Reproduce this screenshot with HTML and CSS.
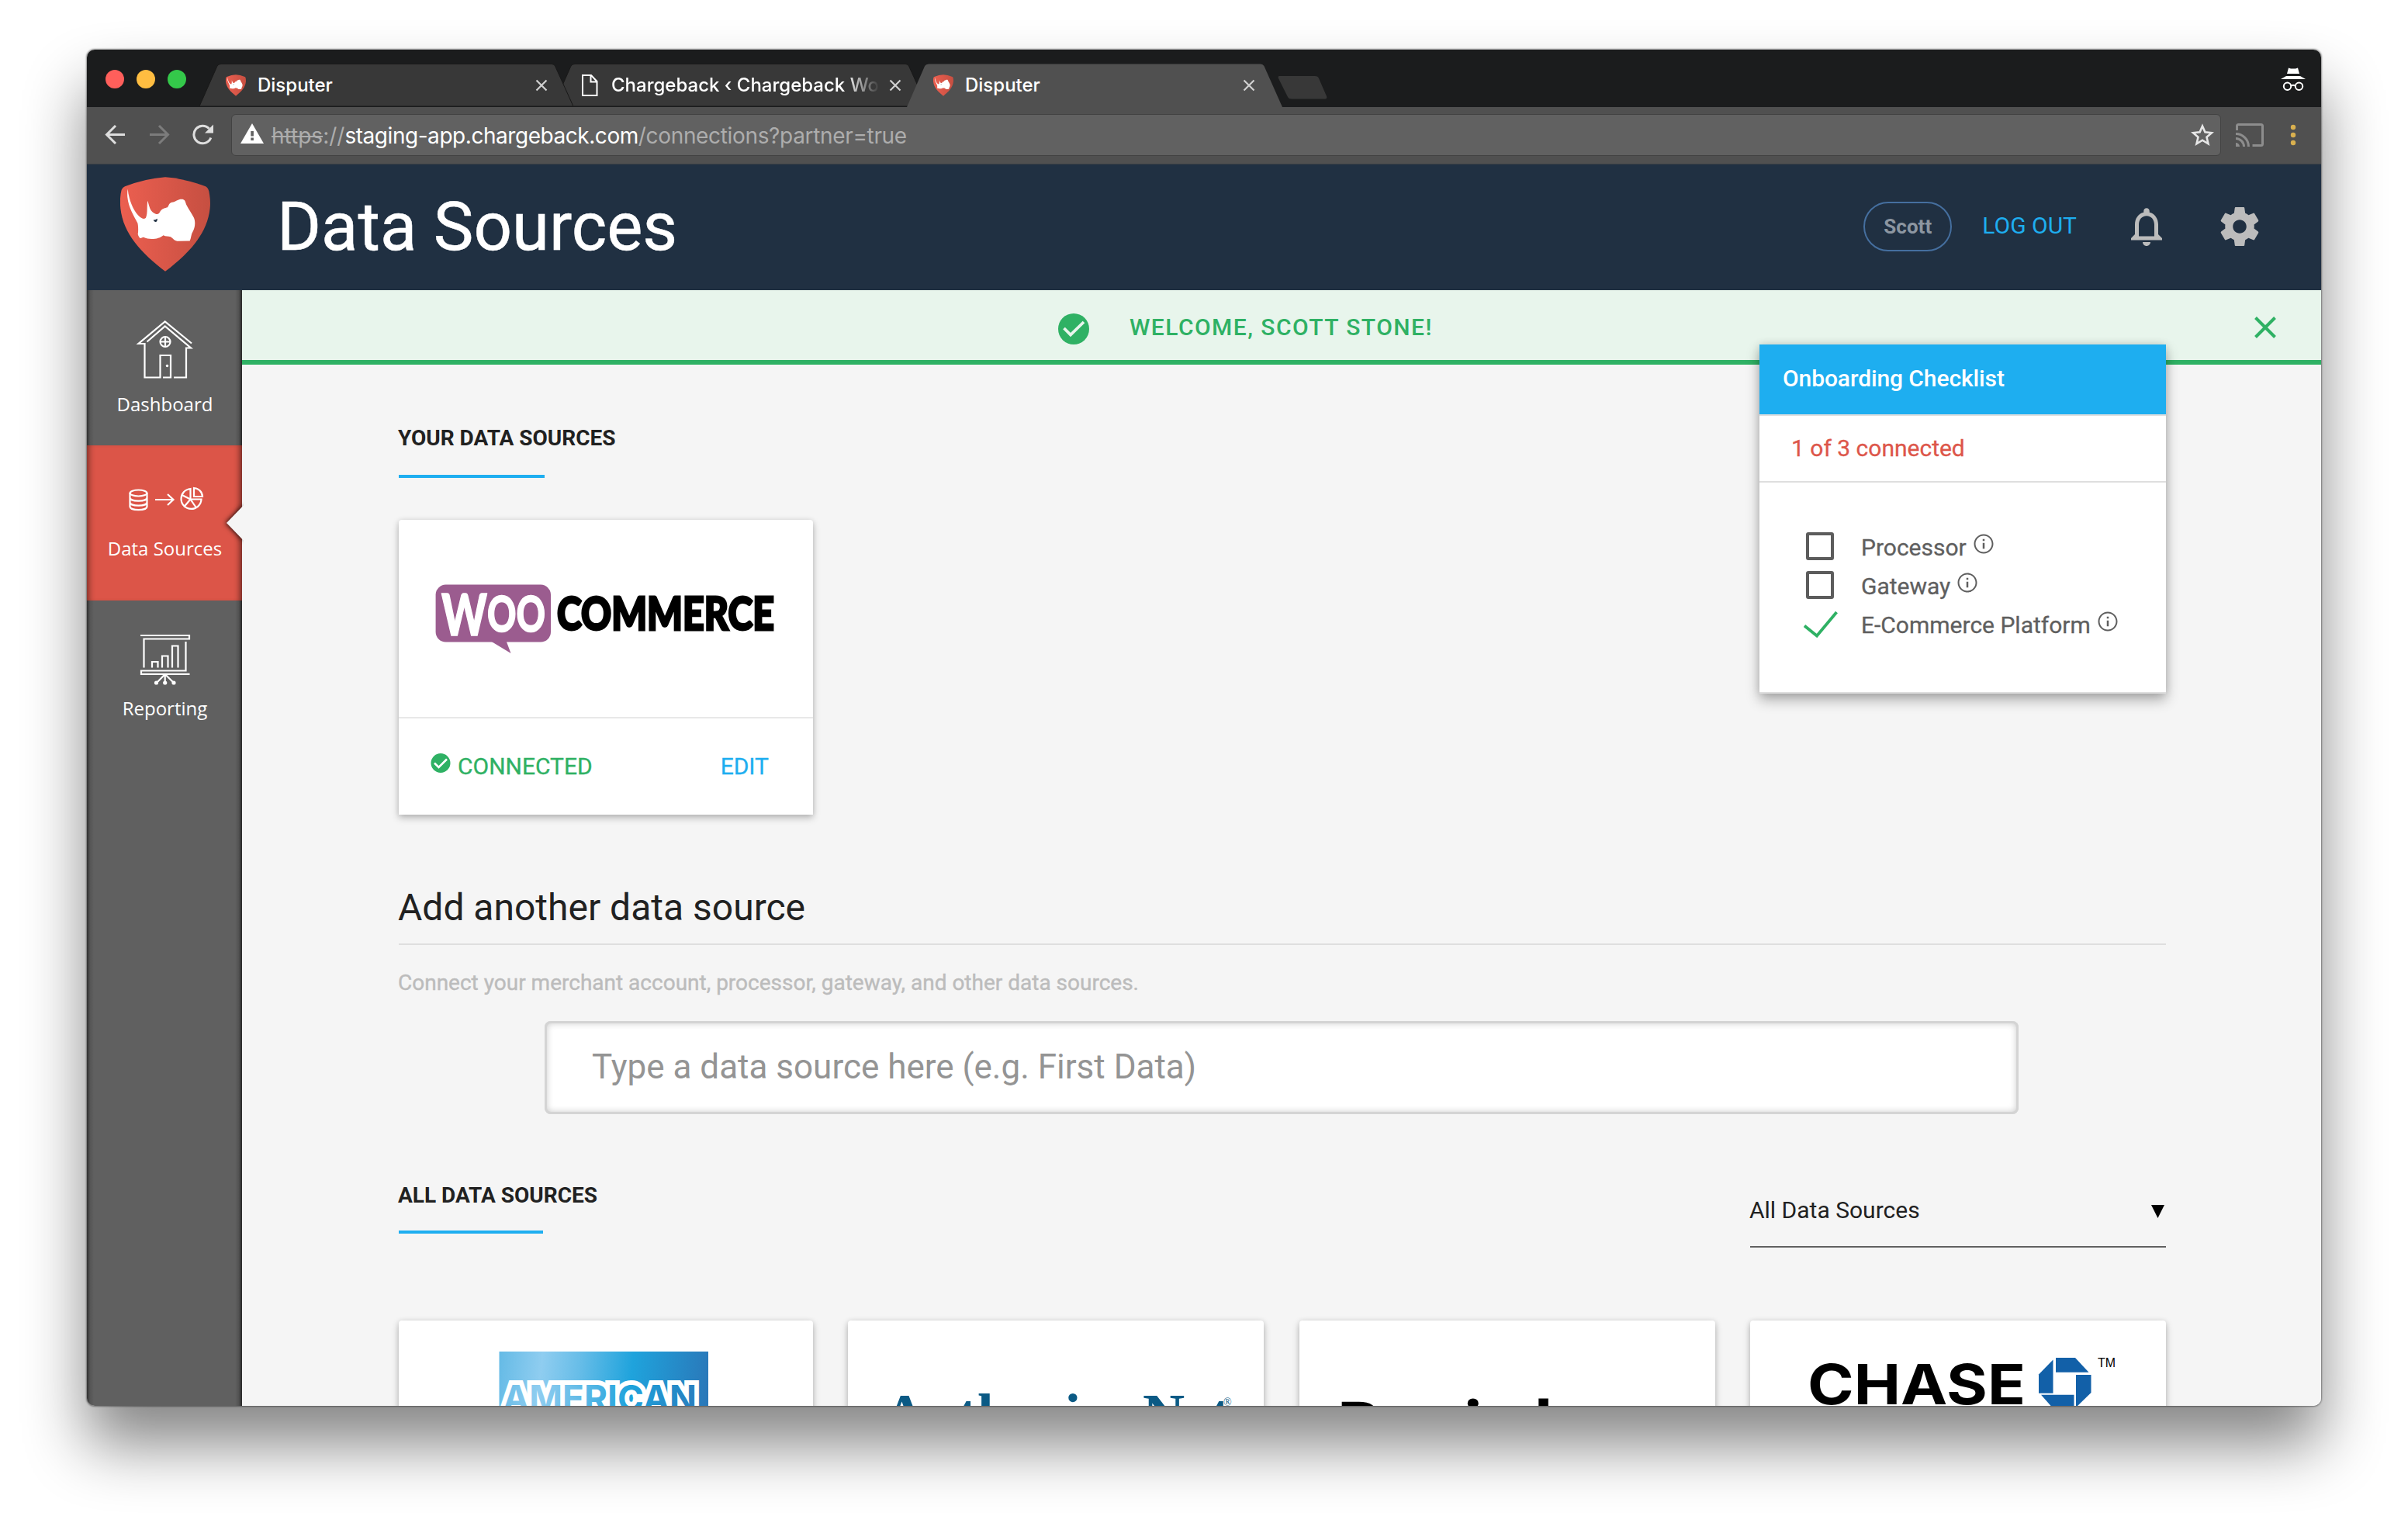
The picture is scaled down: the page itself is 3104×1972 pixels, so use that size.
FILE: index.html
```html
<!DOCTYPE html>
<html lang="en">
<head>
<meta charset="utf-8">
<title>Disputer</title>
<link rel="stylesheet" href="styles.css">
</head>
<body>
<svg class="defs" width="0" height="0" aria-hidden="true">
  <defs>
    <linearGradient id="shieldFill" x1="0" x2="1" y1="0" y2="0">
      <stop offset="0" stop-color="#ec5f50"/><stop offset="1" stop-color="#c64f41"/>
    </linearGradient>
    <linearGradient id="amexFill" gradientUnits="userSpaceOnUse" x1="129" y1="60" x2="399" y2="90">
      <stop offset="0" stop-color="#66bbe6"/><stop offset=".2" stop-color="#8fcdf0"/><stop offset=".38" stop-color="#67bde8"/><stop offset=".63" stop-color="#1fa3dc"/><stop offset="1" stop-color="#2a78b9"/>
    </linearGradient>
    <symbol id="shield" viewBox="75 40 348 365">
      <path fill="url(#shieldFill)" d="M249 40Q320 45 405 76Q414 80 418 95Q425 130 422 160C412 260 340 335 249 405C158 335 86 260 76 160Q72 120 80 90Q84 80 93 76Q175 45 249 40Z"/>
      <path fill="#fff" d="M104 86C108 130 130 185 160 200Q170 203 174 198C182 180 177 150 181 132C188 155 190 175 212 183C222 186 226 180 230 172C238 160 248 160 258 157C264 148 264 138 280 137C292 134 298 126 312 126C324 126 326 132 330 146C340 165 352 182 360 198C368 218 362 240 356 250C348 262 350 275 344 287L300 288C285 288 280 278 270 271C260 268 250 270 242 265C225 280 190 285 165 273C158 273 154 280 150 275C144 265 142 262 144 255C145 240 144 225 142 218C125 185 95 140 104 86Z"/>
      <path fill="#203042" d="M203 206Q212 207 218 201Q220 210 213 214Q204 213 203 206Z"/>
    </symbol>
    <symbol id="tabClose" viewBox="0 0 16 16"><path d="M1.500 1.500l13 13M14.500 1.500l-13 13" stroke="#d0d0d0" stroke-width="2.200" fill="none"/></symbol>
    <symbol id="info" viewBox="0 0 24 24"><path fill="#5f5f5f" d="M11 17h2v-6h-2v6zm1-15C6.480 2 2 6.480 2 12s4.480 10 10 10 10-4.480 10-10S17.520 2 12 2zm0 18.400c-4.630 0-8.400-3.770-8.400-8.400S7.370 3.600 12 3.600s8.400 3.770 8.400 8.400-3.770 8.400-8.400 8.400zM11 9h2V7h-2v2z"/></symbol>
    <symbol id="tabShape" viewBox="0 0 482 55" preserveAspectRatio="none">
      <path d="M0 55L23 3Q24.500 .5 28 .5H454Q457 .5 458.500 3L482 55Z"/>
    </symbol>
  </defs>
</svg>

<div class="window">
  <div class="titlebar">
    <div class="lights"><i class="light red"></i><i class="light yellow"></i><i class="light green"></i></div>
    <div class="tabs">
      <div class="tab front">
        <svg class="tab-shape"><use href="#tabShape"/></svg>
        <svg class="tab-icon"><use href="#shield"/></svg>
        <span class="tab-title">Disputer</span>
        <svg class="tab-close"><use href="#tabClose"/></svg>
      </div>
      <div class="tab">
        <svg class="tab-shape"><use href="#tabShape"/></svg>
        <svg class="tab-icon" viewBox="0 0 26 28"><path d="M4 1H15L22.500 9V27H4ZM14.500 1V9.500H22.500" fill="none" stroke="#fff" stroke-width="2"/></svg>
        <span class="tab-title fade">Chargeback ‹ Chargeback Wor</span>
        <svg class="tab-close"><use href="#tabClose"/></svg>
      </div>
      <div class="tab active">
        <svg class="tab-shape"><use href="#tabShape"/></svg>
        <svg class="tab-icon"><use href="#shield"/></svg>
        <span class="tab-title">Disputer</span>
        <svg class="tab-close"><use href="#tabClose"/></svg>
      </div>
      <svg class="new-tab" viewBox="0 0 64 30"><path d="M2 0H48Q52 0 53 3L63 26Q64 29.500 61 29.500H18Q14 29.500 13 27L1 3Q0 0 2 0Z" fill="#383838"/></svg>
    </div>
    <svg class="incognito" viewBox="0 0 32 30"><path fill="#fff" d="M10 .5L13 1.500H19L22 .5L24 8H8ZM7 11H25L32 15H0Z"/><g fill="none" stroke="#fff" stroke-width="2"><circle cx="8.500" cy="24.200" r="4.700"/><circle cx="23.500" cy="24.200" r="4.700"/><path d="M13 23.500Q16 22 19 23.500"/></g></svg>
  </div>

  <div class="toolbar">
    <svg class="nav" viewBox="0 0 28 28"><path d="M26 13.500H3M14 2L2.500 13.500L14 25" fill="none" stroke="#dedede" stroke-width="3"/></svg>
    <svg class="nav" viewBox="0 0 28 28"><path d="M2 13.500H25M14 2L25.500 13.500L14 25" fill="none" stroke="#7c7c7c" stroke-width="3"/></svg>
    <svg class="nav" viewBox="0 0 28 28"><path d="M22.500 5.800A11.300 11.300 0 1 0 24.800 17.500" fill="none" stroke="#dedede" stroke-width="3"/><path d="M28 .5V11.500H17Z" fill="#dedede"/></svg>
    <div class="omnibox">
      <svg class="warning" viewBox="0 0 30 26"><path d="M15 0L30 26H0Z" fill="#fff"/><path d="M13.300 10h3.600v6.500h-3.600zM13.300 18.500h3.600v3.600h-3.600z" fill="#616161"/></svg>
      <div class="url"><s>https</s>://<b>staging-app.chargeback.com</b><span class="path">/connections?partner=true</span></div>
      <svg class="star" viewBox="0 0 30 30"><path d="M15 3.500L18.400 11.300L27 12.200L20.500 17.800L22.500 26.300L15 21.700L7.500 26.300L9.500 17.800L3 12.200L11.600 11.300Z" fill="none" stroke="#e6e6e6" stroke-width="2.600"/></svg>
    </div>
    <svg class="cast" viewBox="0 0 36 30"><g fill="none" stroke="#8d8d8d" stroke-width="3"><path d="M1.500 9V3.500Q1.500 1.500 3.500 1.500H32.500Q34.500 1.500 34.500 3.500V26.500Q34.500 28.500 32.500 28.500H21.500"/><path d="M0 13.500A16.500 16.500 0 0 1 16.500 30M0 19.500A10.500 10.500 0 0 1 10.500 30"/></g><path d="M0 25A5 5 0 0 1 5 30H0Z" fill="#8d8d8d"/></svg>
    <svg class="dots" viewBox="0 0 12 28"><g fill="#d9b04f"><circle cx="6" cy="4" r="3.200"/><circle cx="6" cy="14" r="3.200"/><circle cx="6" cy="24" r="3.200"/></g></svg>
  </div>

  <header class="header">
    <svg class="logo"><use href="#shield"/></svg>
    <h1 class="title">Data Sources</h1>
    <span class="user">Scott</span>
    <a class="logout">LOG OUT</a>
    <svg class="bell" viewBox="0 0 24 24"><path d="M12 22c1.100 0 2-.9 2-2h-4c0 1.100.9 2 2 2zm6-6v-5c0-3.070-1.630-5.640-4.500-6.320V4c0-.83-.67-1.500-1.500-1.500s-1.500.67-1.500 1.500v.68C7.640 5.360 6 7.920 6 11v5l-2 2v1h16v-1l-2-2zm-2 1H8v-6c0-2.480 1.510-4.500 4-4.500s4 2.020 4 4.500v6z"/></svg>
    <svg class="gear" viewBox="0 0 24 24"><path d="M19.430 12.980c.04-.32.07-.64.07-.98s-.03-.66-.07-.98l2.110-1.650c.19-.15.24-.42.12-.64l-2-3.460c-.12-.22-.39-.3-.61-.22l-2.490 1c-.52-.4-1.080-.73-1.690-.98l-.38-2.650C14.460 2.180 14.250 2 14 2h-4c-.25 0-.46.18-.49.42l-.38 2.650c-.61.25-1.170.59-1.690.98l-2.490-1c-.23-.09-.49 0-.61.22l-2 3.460c-.13.22-.07.49.12.64l2.110 1.650c-.04.32-.07.65-.07.98s.03.66.07.98l-2.110 1.650c-.19.15-.24.42-.12.64l2 3.460c.12.22.39.3.61.22l2.490-1c.52.4 1.080.73 1.690.98l.38 2.650c.03.24.24.42.49.42h4c.25 0 .46-.18.49-.42l.38-2.650c.61-.25 1.170-.59 1.690-.98l2.490 1c.23.09.49 0 .61-.22l2-3.460c.12-.22.07-.49-.12-.64l-2.110-1.650zM12 15.500c-1.930 0-3.500-1.570-3.500-3.500s1.570-3.500 3.500-3.500 3.500 1.570 3.500 3.500-1.570 3.500-3.500 3.500z"/></svg>
  </header>

  <div class="body">
    <nav class="sidebar">
      <a class="item">
        <svg class="art art-home" viewBox="0 0 200 130"><g fill="none" stroke="#fff" stroke-width="2.200">
          <path d="M135 68.500L100.700 40.500L66.500 69H74.500V112.500H94.500V84H108V112.500H98"/><path d="M77.500 66.500L100.700 46.500L134 74.500H128V112.500H112"/>
          <circle cx="101" cy="66.500" r="6.500"/><path d="M101 60V73M94.500 66.500H107.500"/></g><circle cx="103.500" cy="97.500" r="1.700" fill="#fff"/></svg>
        <span>Dashboard</span>
      </a>
      <a class="item active">
        <svg class="art art-sources" viewBox="0 0 200 116"><g fill="none" stroke="#fff" stroke-width="2.200">
          <ellipse cx="66.500" cy="61.500" rx="11" ry="4"/><path d="M55.500 61.500V79C55.500 84.500 77.500 84.500 77.500 79V61.500M55.500 67.500C55.500 73 77.500 73 77.500 67.500M55.500 73.500C55.500 79 77.500 79 77.500 73.500"/>
          <path d="M88 70H111M104 63L111.500 70L104 77"/>
          <path d="M133.500 56A13 13 0 1 0 147.500 69.500H133.500ZM133.500 69.500L121.500 63.500M133.500 69.500L125 79.500M133.500 69.500L141 80.500"/><path d="M138 55A11.500 11.500 0 0 1 149 66H138Z"/></g></svg>
        <span>Data Sources</span>
        <svg class="notch" viewBox="0 0 34 60"><path d="M34 7.300L12 30L34 52.700Z" fill="#f5f5f5"/></svg>
      </a>
      <a class="item">
        <svg class="art art-report" viewBox="0 0 200 122"><g fill="none" stroke="#fff" stroke-width="2.200">
          <path d="M69 45H132V49.500H73.500V86.500M127.500 53V90.500H70V94.800H132.500"/>
          <path d="M84 86.500V79H91.500V86.500M97 86.500V71.500H104.500V86.500M110 86.500V58.500H117.500V86.500"/>
          <path d="M100.700 95L90 106M100.700 95V106M100.700 95L112 106"/></g><g fill="#fff"><circle cx="89.500" cy="106" r="2.600"/><circle cx="100.700" cy="106" r="2.600"/><circle cx="112" cy="106" r="2.600"/></g></svg>
        <span>Reporting</span>
      </a>
    </nav>

    <main class="main">
      <div class="banner">
        <svg class="banner-check" viewBox="0 0 40 40"><circle cx="20" cy="20" r="20" fill="#2fb164"/><path d="M7.500 19L16 27.500L33 11" fill="none" stroke="#e8f5ec" stroke-width="3.800"/></svg>
        <span>WELCOME, SCOTT STONE!</span>
        <svg class="banner-close" viewBox="0 0 28 28"><path d="M1.500 1.500L26.500 26.500M26.500 1.500L1.500 26.500" stroke="#2fb164" stroke-width="4" fill="none"/></svg>
      </div>

      <div class="content">
        <h3 class="label">YOUR DATA SOURCES</h3>
        <div class="rule"></div>

        <div class="card connected-card">
          <svg class="woo" viewBox="0 0 534 254">
            <rect x="47.600" y="83.600" width="148.400" height="74" rx="13" fill="#9b5c8f"/>
            <path d="M118 156L144.500 172L138.500 156Z" fill="#9b5c8f"/>
            <g class="woo-mark"><text x="55" y="149" font-size="75" textLength="59" lengthAdjust="spacingAndGlyphs">W</text><text x="114" y="144" font-size="62" textLength="75" lengthAdjust="spacingAndGlyphs">OO</text></g>
            <text class="commerce" x="204" y="142" textLength="280" lengthAdjust="spacingAndGlyphs">COMMERCE</text>
          </svg>
          <div class="card-foot">
            <svg class="ok" viewBox="0 0 26 26"><circle cx="13" cy="12.500" r="12.500" fill="#2fb164"/><path d="M5 12.500L10.500 18L21 7.500" fill="none" stroke="#fff" stroke-width="2.600"/></svg>
            <span class="status">CONNECTED</span>
            <a class="edit">EDIT</a>
          </div>
        </div>

        <h2 class="heading">Add another data source</h2>
        <p class="hint">Connect your merchant account, processor, gateway, and other data sources.</p>
        <div class="search">Type a data source here (e.g. First Data)</div>

        <div class="filter-row">
          <div>
            <h3 class="label">ALL DATA SOURCES</h3>
            <div class="rule short"></div>
          </div>
          <div class="select"><span>All Data Sources</span><svg viewBox="0 0 17 17"><path d="M0 0H17L8.500 17Z"/></svg></div>
        </div>

        <div class="cards">
          <div class="card">
            <svg viewBox="0 0 536 160"><rect x="129.500" y="40" width="269.500" height="130" fill="url(#amexFill)"/>
              <text class="amex" x="134" y="117" textLength="250" lengthAdjust="spacingAndGlyphs">AMERICAN</text></svg>
          </div>
          <div class="card">
            <svg viewBox="0 0 536 160"><text class="authnet" x="46" y="146">Authorize.<tspan x="380">Net</tspan></text><text class="reg" x="484" y="110">®</text></svg>
          </div>
          <div class="card">
            <svg viewBox="0 0 536 180"><text class="braintree" x="49 104 145 212 241 301 345 385 435" y="168 168 168 166 168 159 168 168 168">Braintree</text></svg>
          </div>
          <div class="card">
            <svg viewBox="0 0 536 160"><text class="chase" x="74" y="108" textLength="281" lengthAdjust="spacingAndGlyphs">CHASE</text>
              <g fill="#1260a8"><path d="M394 48H419L436.500 66.700H394Z"/><path d="M372 69.500L390.500 50.500V93.700H372Z"/><path d="M420 70H439.500V93L420 112Z"/><path d="M375 95.700H417.500V115H392Z"/></g>
              <text class="tm" x="448" y="60" textLength="23" lengthAdjust="spacingAndGlyphs">TM</text></svg>
          </div>
        </div>
      </div>

      <aside class="checklist">
        <div class="checklist-title">Onboarding Checklist</div>
        <div class="checklist-count">1 of 3 connected</div>
        <ul>
          <li><svg class="mark" viewBox="0 0 44 36"><rect x="5" y="2" width="32" height="32" rx="1" fill="none" stroke="#5c5c5c" stroke-width="4"/></svg><span>Processor</span><svg class="info"><use href="#info"/></svg></li>
          <li><svg class="mark" viewBox="0 0 44 36"><rect x="5" y="2" width="32" height="32" rx="1" fill="none" stroke="#5c5c5c" stroke-width="4"/></svg><span>Gateway</span><svg class="info"><use href="#info"/></svg></li>
          <li><svg class="mark" viewBox="0 0 44 36"><path d="M1 20.500L17 33.500L42.500 3" fill="none" stroke="#2fb164" stroke-width="3.800"/></svg><span>E-Commerce Platform</span><svg class="info"><use href="#info"/></svg></li>
        </ul>
      </aside>
    </main>
  </div>
</div>
</body>
</html>
```
FILE: styles.css
```css
* { box-sizing: border-box; }

body {
  margin: 0;
  height: 1972px;
  padding: 64px 112px 0;
  overflow: hidden;
  background: #fff;
  font-family: Roboto, "Liberation Sans", sans-serif;
}

h1, h2, h3, p, ul { margin: 0; padding: 0; font-weight: 400; }
svg { display: block; flex: none; }
.defs { position: absolute; }

.window {
  display: flex;
  flex-direction: column;
  width: 2880px;
  height: 1748px;
  border-radius: 10px;
  overflow: hidden;
  background: #f5f5f5;
  box-shadow: 0 0 2px 1px rgba(0, 0, 0, .4), 0 50px 80px rgba(0, 0, 0, .48);
}

/* Browser chrome */
.titlebar {
  display: flex;
  flex: none;
  height: 74px;
  background: #1b1c1d;
}

.lights { display: flex; gap: 16px; width: 145px; padding: 26px 0 0 24px; }
.light { width: 24px; height: 24px; border-radius: 50%; }
.red { background: #ff5f5b; }
.yellow { background: #ffbd41; }
.green { background: #34c84a; }

.tabs { display: flex; flex: 1; padding-top: 18px; font: 500 24px/1 Inter, "Liberation Sans", sans-serif; color: #fff; }
.tab { position: relative; display: flex; align-items: center; width: 482px; height: 55px; padding-left: 34px; }
.tab + .tab { margin-left: -26px; }
.tab.front { z-index: 1; }
.tab.active { z-index: 2; height: 56px; width: 484px; }
.tab-shape { position: absolute; left: 0; top: 0; width: 100%; height: 100%; fill: #383838; stroke: #191919; stroke-width: 1; }
.tab.active .tab-shape { fill: #505050; stroke: none; }
.tab-icon { position: relative; width: 26px; height: 28px; margin-right: 15px; }
.tab-title { position: relative; width: 346px; line-height: 36px; white-space: nowrap; }
.fade { -webkit-mask-image: linear-gradient(to right, #000 87%, transparent); mask-image: linear-gradient(to right, #000 87%, transparent); }
.tab-close { position: relative; width: 16px; height: 16px; margin-left: 12px; }
.new-tab { width: 64px; height: 30px; margin: 16px 0 0 -6px; }
.incognito { width: 32px; height: 30px; margin: 23px 20px 0 0; }

.toolbar {
  display: flex;
  flex: none;
  align-items: center;
  height: 74px;
  padding: 0 0 2px 23px;
  background: #505050;
  border-bottom: 1px solid #3a3f44;
}
.nav { width: 28px; height: 28px; margin-right: 28px; }
.omnibox {
  display: flex;
  align-items: center;
  width: 2565px;
  height: 54px;
  margin-left: -5px;
  padding: 0 8px 0 11px;
  background: #616161;
  border: 1px solid #424242;
  border-radius: 6px;
}
.warning { width: 30px; height: 26px; margin: -4px 10px 0 0; }
.url { flex: 1; padding-top: 2px; font: 400 28px/40px Inter, "Liberation Sans", sans-serif; color: #adadad; }
.url b { font-weight: 400; color: #fff; letter-spacing: -.45px; }
.path { letter-spacing: -.34px; }
.star { width: 30px; height: 30px; }
.cast { width: 36px; height: 30px; margin-left: 19px; }
.dots { width: 12px; height: 28px; margin-left: 32px; }

/* Application header */
.header {
  display: flex;
  flex: none;
  align-items: center;
  height: 162px;
  padding: 0 75px 2px 43px;
  background: #203042;
}
.logo { width: 116px; height: 122px; margin-top: -6px; }
.title { flex: 1; margin-left: 86px; font-size: 87px; line-height: 120px; color: #fff; -webkit-text-stroke: .5px #fff; }
.user {
  width: 114px;
  height: 64px;
  border: 2px solid #456f9f;
  border-radius: 32px;
  font-size: 26px;
  font-weight: 700;
  line-height: 61px;
  text-align: center;
  color: #8c96a1;
}
.logout { margin: -3px 60px 0 39px; font-size: 30px; color: #1eaef0; }
.bell, .gear { width: 60px; height: 60px; fill: #bcbcbc; }
.gear { margin-left: 60px; }

.body { display: flex; flex: 1; min-height: 0; }

/* Sidebar */
.sidebar { position: relative; flex: none; width: 200px; background: #606060; }
.sidebar::after {
  content: "";
  position: absolute;
  inset: 0;
  background:
    linear-gradient(to right, rgba(0, 0, 0, .5), rgba(0, 0, 0, .12) 4px, transparent 9px),
    linear-gradient(to left, rgba(0, 0, 0, .6), rgba(0, 0, 0, .15) 4px, transparent 9px);
}
.item {
  position: relative;
  display: flex;
  flex-direction: column;
  align-items: center;
  height: 200px;
  font: 400 24px/34px "Open Sans", "Noto Sans", sans-serif;
  color: #fff;
}
.item span { padding-left: 1px; }
.item.active { z-index: 1; background: #dc5548; box-shadow: inset 9px 0 8px -7px rgba(0, 0, 0, .5), inset -9px 0 8px -7px rgba(0, 0, 0, .6); }
.art { width: 200px; }
.art-home { height: 130px; }
.art-sources { height: 116px; }
.art-report { height: 122px; }
.notch { position: absolute; right: -2px; top: 70px; width: 34px; height: 60px; filter: drop-shadow(-1px 0 3px rgba(0, 0, 0, .9)); clip-path: inset(0 0 0 0); }

/* Main column */
.main { position: relative; flex: 1; background: #f5f5f5; }
.banner {
  display: flex;
  align-items: center;
  height: 96px;
  padding: 6px 58px 0 1052px;
  background: #e8f5ec;
  border-bottom: 6px solid #2fb164;
  font-size: 30px;
  font-weight: 500;
  letter-spacing: 1.450px;
  color: #2fb164;
}
.banner span { margin-top: -2px; }
.banner-check { width: 40px; height: 40px; margin: 4px 52px 0 0; }
.banner-close { width: 28px; height: 28px; margin-left: auto; }

.content { padding: 74px 200px 0 202px; }
.label { margin-left: -1px; font-size: 28px; font-weight: 700; line-height: 41px; color: #212121; }
.rule { width: 188px; height: 4px; margin-top: 27px; background: #1eaef0; }
.rule.short { width: 186px; margin-top: 25px; }

.card {
  height: 380px;
  background: #fff;
  border-radius: 4px 4px 0 0;
  box-shadow: 0 4px 10px rgba(0, 0, 0, .26), 0 0 6px rgba(0, 0, 0, .08);
  overflow: hidden;
}
.card svg { display: block; }
.connected-card { width: 534px; margin-top: 54px; }
.woo { width: 534px; height: 254px; }
.woo-mark { font-family: Lato, sans-serif; font-weight: 900; fill: #fff; stroke: #fff; stroke-width: 1.500; stroke-linejoin: round; }
.commerce { font: 900 59px Lato, sans-serif; stroke: #000; stroke-width: 3; }
.card-foot {
  display: flex;
  align-items: center;
  height: 126px;
  padding: 0 57px 0 41px;
  border-top: 2px solid #e8e8e8;
  font-size: 30px;
}
.ok { width: 26px; height: 26px; margin: -8px 9px 0 0; }
.status { flex: 1; margin-top: -2px; color: #2fb164; -webkit-text-stroke: .3px; }
.edit { margin-top: -2px; color: #1eaef0; -webkit-text-stroke: .3px; }

.heading {
  margin: 90px 0 0;
  padding-bottom: 16px;
  border-bottom: 2px solid #dedede;
  font-size: 48px;
  line-height: 60px;
  text-indent: -1px;
  color: #212121;
}
.hint { margin-top: 29px; font-size: 28px; line-height: 40px; text-indent: -1px; color: #bcbcbc; -webkit-text-stroke: .4px; }
.search {
  width: 1900px;
  height: 120px;
  margin: 29px 0 0 188px;
  padding-left: 61px;
  background: #fff;
  border-radius: 8px;
  box-shadow: inset 0 0 0 3px #d4d4d4, inset 0 0 8px 3px rgba(0, 0, 0, .2);
  font-size: 44px;
  line-height: 118px;
  color: #949494;
}

.filter-row { display: flex; justify-content: space-between; margin-top: 84px; }
.select {
  display: flex;
  justify-content: space-between;
  width: 536px;
  height: 88px;
  padding-top: 20px;
  border-bottom: 2px solid #616161;
  font-size: 30px;
  line-height: 40px;
  text-indent: -1px;
  color: #212121;
}
.select svg { width: 17px; height: 17px; margin: 13px 2px 0 0; fill: #000; }

.cards { display: grid; grid-template-columns: 534px 536px 536px 536px; justify-content: space-between; margin-top: 94px; }
.cards svg { width: 536px; }
.amex { font: 700 47px Inter, sans-serif; fill: url(#amexFill); stroke: #fff; stroke-width: 12; paint-order: stroke; }
.authnet { font: 700 75px "Liberation Serif", serif; fill: #0b5a85; }
.reg { font: 400 14px "Liberation Serif", serif; fill: #0b5a85; }
.braintree { font: 700 89px Roboto, sans-serif; }
.chase { font: 700 72px Inter, sans-serif; }
.tm { font: 400 17px "Liberation Sans", sans-serif; }

/* Onboarding checklist, floating over the page */
.checklist {
  position: absolute;
  left: 1956px;
  top: 70px;
  width: 524px;
  height: 450px;
  background: #fff;
  border-bottom: 2px solid #dedede;
  box-shadow: 0 8px 16px rgba(0, 0, 0, .3), 0 0 10px rgba(0, 0, 0, .12);
  font-size: 30px;
  color: #5f5f5f;
}
.checklist-title { height: 92px; padding-left: 30px; line-height: 88px; background: #1eaef0; border-bottom: 2px solid #dedede; font-weight: 500; color: #fff; letter-spacing: -.1px; }
.checklist-count { height: 86px; padding-left: 41px; line-height: 83px; border-bottom: 2px solid #dedede; color: #dd564a; -webkit-text-stroke: .3px; }
.checklist ul { padding: 59px 0 0 57px; list-style: none; }
.checklist li { display: flex; align-items: center; height: 50px; }
.checklist span { margin-top: -2px; -webkit-text-stroke: .3px; }
.mark { width: 44px; height: 36px; margin: -4px 30px 0 0; }
.info { width: 30px; height: 30px; margin: -10px 0 0 7px; }
```
